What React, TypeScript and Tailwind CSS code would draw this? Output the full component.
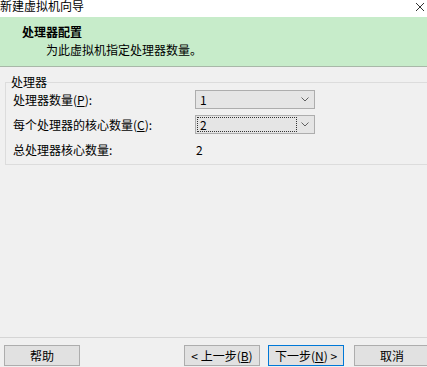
import React from 'react';

const font = { fontFamily: '"Noto Sans CJK SC", "Noto Sans", sans-serif' };

function Chevron() {
  return (
    <svg width="8" height="5" viewBox="0 0 8 5" className="text-[#606060]">
      <path d="M0.5 0.5 L4 4 L7.5 0.5" fill="none" stroke="currentColor" strokeWidth="1" />
    </svg>
  );
}

function Combo({ value, focused }: { value: string; focused?: boolean }) {
  return (
    <div className="w-[120px] h-[19px] bg-[#e5e5e5] border border-[#adadad] flex items-center">
      <div className="flex-1 h-full p-[1px]">
        <div
          className={
            'h-full w-[100px] flex items-center pl-[2px] leading-none ' +
            (focused ? 'border border-dotted border-[#333]' : 'border border-transparent')
          }
        >
          {value}
        </div>
      </div>
      <div className="w-[16px] flex items-center justify-center pr-[3px]">
        <Chevron />
      </div>
    </div>
  );
}

function Btn({ children, primary }: { children: React.ReactNode; primary?: boolean }) {
  return (
    <button
      className={
        'w-[76px] h-[21px] bg-[#e1e1e1] border text-[12px] leading-none flex items-center justify-center ' +
        (primary ? 'border-[#0078d7]' : 'border-[#adadad]')
      }
    >
      {children}
    </button>
  );
}

export default function App() {
  return (
    <div className="w-[427px] h-[367px] bg-[#f0f0f0] flex flex-col overflow-hidden text-[12px] text-black" style={font}>
      {/* 标题栏 */}
      <div className="h-[17px] bg-white flex items-start justify-between">
        <span className="-mt-[2px] leading-[16px]">新建虚拟机向导</span>
        <svg width="10" height="10" viewBox="0 0 10 10" className="mt-[2px] mr-[2px]">
          <path d="M1 1 L9 9 M9 1 L1 9" stroke="#333" strokeWidth="1" />
        </svg>
      </div>

      {/* 页头 */}
      <div className="h-[50px] bg-[#c7ecca] border-b border-[#a8b8a8] pl-[22px] pt-[7px]">
        <div className="font-bold leading-[16px]">处理器配置</div>
        <div className="pl-[24px] mt-[2px] leading-[16px]">为此虚拟机指定处理器数量。</div>
      </div>

      {/* 处理器 */}
      <div className="pl-[5px] pt-[8px]">
        <fieldset className="border border-r-0 border-[#dcdcdc] pl-[7px] pr-0 pb-[5px] pt-[1px]">
          <legend className="-ml-[2px] px-0 leading-[14px]">处理器</legend>
          <div className="grid grid-cols-[182px_1fr] gap-y-[6px] items-center">
            <span>
              处理器数量(<span className="underline">P</span>):
            </span>
            <Combo value="1" />
            <span>
              每个处理器的核心数量(<span className="underline">C</span>):
            </span>
            <Combo value="2" focused />
            <span className="h-[19px] flex items-center">总处理器核心数量:</span>
            <span className="pl-[1px]">2</span>
          </div>
        </fieldset>
      </div>

      <div className="flex-1" />

      {/* 按钮 */}
      <div className="border-t border-[#d5d5d5] h-[30px] flex items-start pt-[7px]">
        <div className="pl-[4px]">
          <Btn>帮助</Btn>
        </div>
        <div className="ml-auto flex gap-[8px] -mr-[3px]">
          <Btn>
            &lt; 上一步(<span className="underline">B</span>)
          </Btn>
          <Btn primary>
            下一步(<span className="underline">N</span>) &gt;
          </Btn>
          <div className="ml-[2px]">
            <Btn>取消</Btn>
          </div>
        </div>
      </div>
    </div>
  );
}
